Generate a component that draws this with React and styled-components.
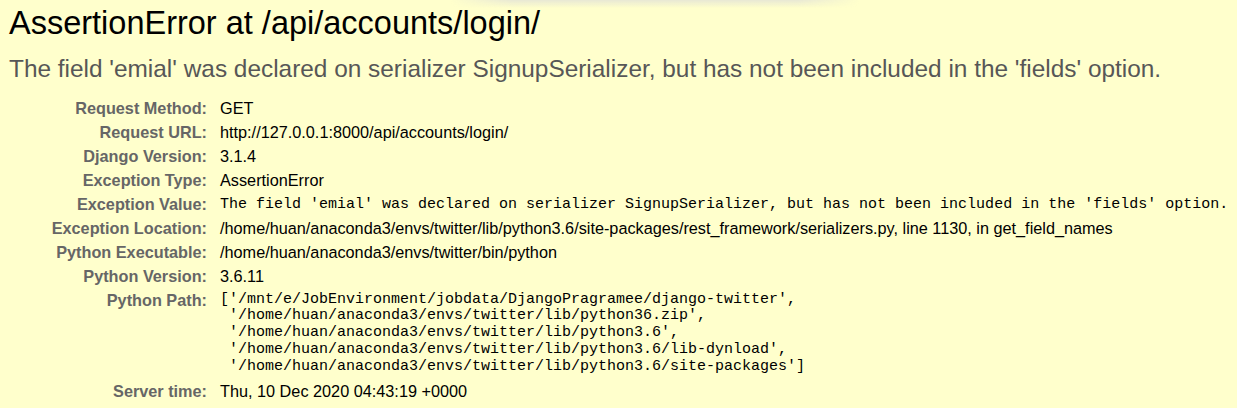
import React from 'react';
import styled, { createGlobalStyle } from 'styled-components';

const GlobalStyle = createGlobalStyle`
  html, body {
    margin: 0;
    padding: 0;
    background: #ffffcc;
  }
  body {
    font-family: 'Liberation Sans', Arial, sans-serif;
    overflow: hidden;
  }
`;

const Summary = styled.section`
  position: relative;
  padding: 5px 0 0 9px;
  background: #ffffcc;
  min-height: 408px;
  box-sizing: border-box;
`;

// faint shadow left by a browser popup at the top edge
const TopShade = styled.div`
  position: absolute;
  top: 0;
  left: 450px;
  width: 410px;
  height: 8px;
  background: linear-gradient(to bottom, rgba(225, 225, 215, 0.75), rgba(255, 255, 204, 0));
  mask-image: linear-gradient(to right, transparent, #000 15%, #000 85%, transparent);
  pointer-events: none;
`;

const Title = styled.h1`
  margin: 0;
  font-size: 32.5px;
  font-weight: normal;
  line-height: normal;
  color: #000;
`;

const ExceptionValue = styled.pre`
  margin: 13px 0 0;
  font-family: 'Liberation Sans', Arial, sans-serif;
  font-size: 24.4px;
  line-height: normal;
  color: #575757;
  white-space: pre;
`;

const Meta = styled.table`
  margin-top: 13px;
  border: none;
  border-collapse: collapse;
  width: 100%;
`;

const Label = styled.th`
  width: 198px;
  padding: 2.5px 8px 2.5px 0;
  vertical-align: top;
  text-align: right;
  font-size: 16.25px;
  line-height: 19px;
  font-weight: bold;
  color: #666;
  white-space: nowrap;
`;

const Value = styled.td`
  padding: 2.5px 0 2.5px 5px;
  vertical-align: top;
  font-size: 16.25px;
  line-height: 19px;
  color: #000;
  white-space: nowrap;
`;

const Code = styled.pre`
  margin: 0;
  padding-top: ${({ $multi }) => ($multi ? '1px' : '0')};
  margin-bottom: ${({ $multi }) => ($multi ? '2px' : '0')};
  font-family: 'Liberation Mono', 'Courier New', monospace;
  font-size: 15px;
  line-height: ${({ $multi }) => ($multi ? '16.75px' : '19px')};
  color: #000;
  white-space: pre;
`;

const message =
  "The field 'emial' was declared on serializer SignupSerializer, but has not been included in the 'fields' option.";

const pythonPath = `['/mnt/e/JobEnvironment/jobdata/DjangoPragramee/django-twitter',
 '/home/huan/anaconda3/envs/twitter/lib/python36.zip',
 '/home/huan/anaconda3/envs/twitter/lib/python3.6',
 '/home/huan/anaconda3/envs/twitter/lib/python3.6/lib-dynload',
 '/home/huan/anaconda3/envs/twitter/lib/python3.6/site-packages']`;

const rows = [
  ['Request Method:', 'GET'],
  ['Request URL:', 'http://127.0.0.1:8000/api/accounts/login/'],
  ['Django Version:', '3.1.4'],
  ['Exception Type:', 'AssertionError'],
  ['Exception Value:', message, 'code'],
  [
    'Exception Location:',
    '/home/huan/anaconda3/envs/twitter/lib/python3.6/site-packages/rest_framework/serializers.py, line 1130, in get_field_names',
  ],
  ['Python Executable:', '/home/huan/anaconda3/envs/twitter/bin/python'],
  ['Python Version:', '3.6.11'],
  ['Python Path:', pythonPath, 'multi'],
  ['Server time:', 'Thu, 10 Dec 2020 04:43:19 +0000'],
];

const App = () => (
  <>
    <GlobalStyle />
    <Summary>
      <TopShade />
      <Title>AssertionError at /api/accounts/login/</Title>
      <ExceptionValue>{message}</ExceptionValue>
      <Meta>
        <tbody>
          {rows.map(([label, value, kind]) => (
            <tr key={label}>
              <Label>{label}</Label>
              <Value>
                {kind ? <Code $multi={kind === 'multi'}>{value}</Code> : value}
              </Value>
            </tr>
          ))}
        </tbody>
      </Meta>
    </Summary>
  </>
);

export default App;
